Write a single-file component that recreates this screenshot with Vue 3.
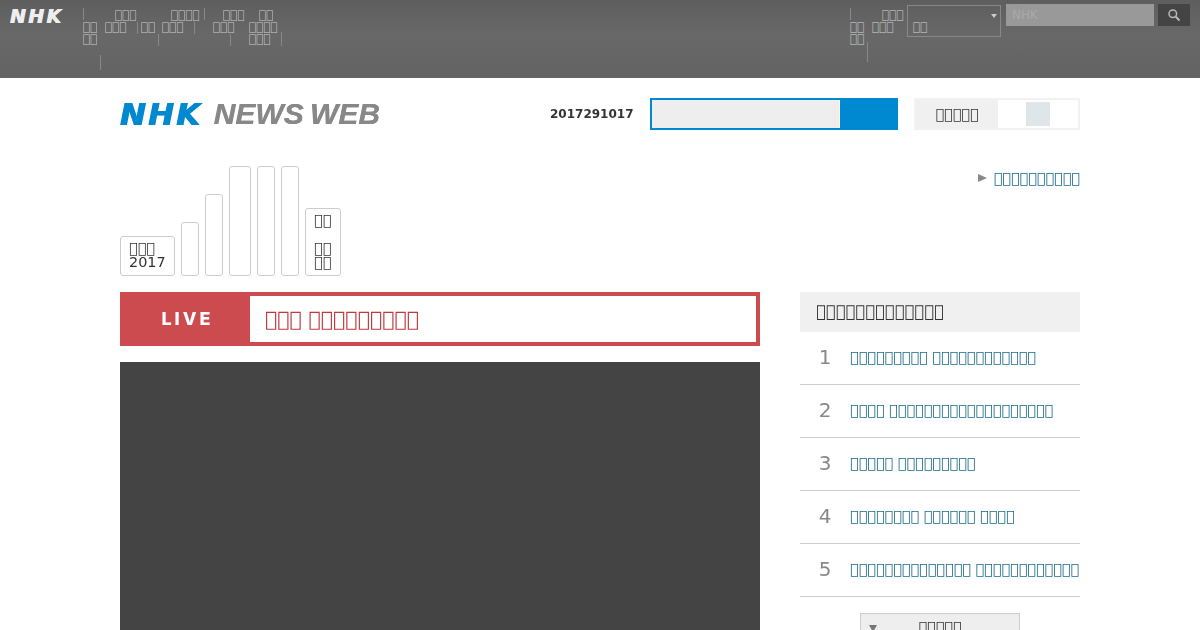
<script setup>
const box = (n) => '\uE000'.repeat(n);
const words = (...counts) => counts.map(box).join(' ');

const globalNav = [
  { lines: [2, 2], row: 2, width: 22, indent: 0 },
  { lines: [3, 3], row: 1, width: 32, indent: 10 },
  { lines: [2], row: 2, width: 25, indent: 4 },
  { lines: [4, 3], row: 1, width: 51, indent: 9 },
  { lines: [3, 3], row: 1, width: 36, indent: 10 },
  { lines: [2, 4, 3], row: 1, width: 40, indent: 10 },
];

const separators = [
  { x: 83, y: 8, h: 12 }, { x: 137, y: 22, h: 12 }, { x: 158, y: 34, h: 12 }, { x: 194, y: 22, h: 12 },
  { x: 204, y: 8, h: 12 }, { x: 230, y: 34, h: 12 }, { x: 281, y: 32, h: 14 }, { x: 100, y: 55, h: 15 },
];

const tabs = [
  { cls: 'tab-home', lines: [box(3), '2017'] },
  { cls: 'tab-a' }, { cls: 'tab-b' }, { cls: 'tab-c' }, { cls: 'tab-d' }, { cls: 'tab-e' },
];

const ranking = [
  words(9, 12), words(4, 19), words(5, 9), words(8, 6, 4), words(14, 12),
];
</script>

<template>
  <div class="page">
    <header class="global-bar">
      <div class="global-logo">NHK</div>
      <nav class="global-nav">
        <span v-for="s in separators" :key="s.x" class="sep" :style="{ left: s.x - 83 + 'px', top: s.y + 'px', height: s.h + 'px' }"></span>
        <a
          v-for="(item, i) in globalNav"
          :key="i"
          class="global-item"
          :class="'row-' + item.row"
          :style="{ width: item.width + 'px' }"
        >
          <span v-for="(n, j) in item.lines" :key="j" class="global-line" :style="{ paddingLeft: (j === 0 ? item.indent : 0) + 'px' }">{{ box(n) }}</span>
        </a>
      </nav>
      <div class="global-tools">
        <div class="tools-nav">
          <span class="sep tools-sep-a"></span>
          <span class="sep tools-sep-b"></span>
          <a class="global-item row-2 tools-first"><span class="global-line">{{ box(2) }}</span><span class="global-line">{{ box(2) }}</span></a>
          <a class="global-item row-1 tools-second"><span class="global-line indent">{{ box(3) }}</span><span class="global-line">{{ box(3) }}</span></a>
        </div>
        <div class="region-select">
          <span class="region-label">{{ box(2) }}</span>
          <i class="region-arrow"></i>
        </div>
        <div class="global-search">NHK</div>
        <button class="global-search-btn">
          <svg width="14" height="14" viewBox="0 0 14 14" fill="none" stroke="#b8b8b8">
            <circle cx="5.8" cy="5.8" r="3.8" stroke-width="1.5" />
            <path d="M8.8 8.8l3.7 3.7" stroke-width="2" />
          </svg>
        </button>
      </div>
    </header>

    <main class="content">
      <div class="masthead">
        <div class="logo">
          <span class="logo-nhk">NHK</span>
          <span class="logo-web">NEWS WEB</span>
        </div>
        <div class="date">2017291017</div>
        <div class="site-search">
          <div class="site-search-input"></div>
          <button class="site-search-btn"></button>
        </div>
        <div class="font-size">
          <div class="font-size-label">{{ box(5) }}</div>
          <div class="font-size-options"><span class="font-size-current"></span></div>
        </div>
      </div>

      <div class="tabs-row">
        <ul class="tabs">
          <li v-for="tab in tabs" :key="tab.cls" class="tab" :class="tab.cls">
            <span v-for="line in tab.lines" :key="line">{{ line }}</span>
          </li>
          <li class="tab tab-more">
            <span class="more-top">{{ box(2) }}</span>
            <span>{{ box(2) }}</span>
            <span>{{ box(2) }}</span>
          </li>
        </ul>
        <a class="all-link"><i class="all-arrow"></i>{{ box(10) }}</a>
      </div>

      <div class="columns">
        <section class="main-col">
          <div class="live">
            <div class="live-tag">LIVE</div>
            <div class="live-title">{{ words(3, 9) }}</div>
          </div>
          <div class="video"></div>
        </section>
        <aside class="side-col">
          <h2 class="side-title">{{ box(13) }}</h2>
          <ol class="rank">
            <li v-for="(title, i) in ranking" :key="i" class="rank-row">
              <span class="rank-num">{{ i + 1 }}</span>
              <a class="rank-link">{{ title }}</a>
            </li>
          </ol>
          <button class="more-btn"><i class="more-arrow"></i><span class="more-label">{{ box(5) }}</span></button>
        </aside>
      </div>
    </main>
  </div>
</template>

<style>
html, body {
  margin: 0;
  height: 630px;
  overflow: hidden;
  background: #fff;
}
</style>

<style scoped>
.page {
  width: 1200px;
  height: 630px;
  overflow: hidden;
  font-family: "DejaVu Sans", sans-serif;
  will-change: opacity;
}

.global-bar {
  height: 78px;
  background: linear-gradient(#5e5e5e, #686868 45%, #636363);
  display: flex;
  color: #b4b4b4;
  font-size: 12px;
  line-height: 12px;
}

.global-logo {
  width: 83px;
  padding: 7px 0 0 10px;
  box-sizing: border-box;
  font-size: 19px;
  line-height: 18px;
  font-weight: bold;
  font-style: italic;
  letter-spacing: 2.4px;
  color: #eee;
  text-shadow: 0.5px 0 #eee, -0.3px 0 #eee;
}

.global-nav {
  position: relative;
  display: flex;
  align-items: flex-start;
  width: 210px;
  margin-top: 9px;
  margin-bottom: -9px;
}

.sep {
  position: absolute;
  width: 1px;
  background: #888;
  margin-top: -9px;
}

.global-item {
  display: flex;
  flex-direction: column;
  flex: none;
}

.global-item.row-2 {
  padding-top: 12px;
}

.global-line {
  display: block;
  white-space: nowrap;
  height: 12px;
}

.global-tools {
  margin-left: auto;
  display: flex;
  align-items: flex-start;
  padding: 4px 10px 0 0;
}

.tools-nav {
  position: relative;
  display: flex;
  width: 57px;
  padding-top: 5px;
}

.tools-sep-a {
  left: 0;
  top: 13px;
  height: 12px;
}

.tools-sep-b {
  left: 17px;
  top: 47px;
  height: 20px;
}

.tools-first {
  width: 22px;
}

.tools-second {
  width: 35px;
}

.indent {
  padding-left: 10px;
}

.region-select {
  position: relative;
  width: 94px;
  height: 32px;
  margin-top: 1px;
  box-sizing: border-box;
  border: 1px solid #888;
  padding: 15px 0 0 5px;
}

.region-arrow {
  position: absolute;
  right: 3px;
  top: 8px;
  border: 3px solid transparent;
  border-top: 4px solid #ccc;
  border-bottom: 0;
}

.global-search {
  width: 148px;
  height: 22px;
  margin-left: 5px;
  background: #999;
  color: #aaa;
  font-size: 12px;
  line-height: 22px;
  padding-left: 6px;
  box-sizing: border-box;
}

.global-search-btn {
  width: 32px;
  height: 22px;
  margin-left: 4px;
  padding: 0;
  border: 0;
  background: #444;
  display: flex;
  align-items: center;
  justify-content: center;
}

.content {
  width: 960px;
  margin: 0 auto;
}

.masthead {
  display: flex;
  align-items: center;
  height: 32px;
  padding-top: 20px;
}

.logo {
  display: flex;
  align-items: center;
  width: 430px;
}

.logo-nhk {
  font-size: 31px;
  line-height: 32px;
  font-weight: bold;
  font-style: italic;
  color: #0088d0;
  letter-spacing: 2.2px;
  text-shadow: 0.7px 0 #0088d0, -0.5px 0 #0088d0;
}

.logo-web {
  margin-left: 11px;
  font-family: "Liberation Sans", sans-serif;
  font-size: 30px;
  line-height: 32px;
  font-weight: bold;
  font-style: italic;
  word-spacing: -2px;
  color: #888;
  text-shadow: 0.4px 0 #888;
}

.date {
  width: 100px;
  font-size: 12px;
  font-weight: bold;
  color: #333;
}

.site-search {
  width: 248px;
  height: 32px;
  box-sizing: border-box;
  border: 2px solid #0088d0;
  display: flex;
}

.site-search-input {
  flex: 1;
  background: #eee;
  border-right: 1px solid #fff;
}

.site-search-btn {
  width: 56px;
  border: 0;
  padding: 0;
  background: #0088d0;
}

.font-size {
  width: 166px;
  height: 32px;
  margin-left: 16px;
  box-sizing: border-box;
  border: 2px solid #f2f2f2;
  display: flex;
}

.font-size-label {
  width: 82px;
  background: #f0f0f0;
  color: #333;
  font-size: 14.4px;
  line-height: 28px;
  text-align: center;
}

.font-size-options {
  flex: 1;
  padding: 2px 0 0 28px;
}

.font-size-current {
  display: block;
  width: 24px;
  height: 24px;
  background: #dfe6ea;
}

.tabs-row {
  display: flex;
  justify-content: space-between;
  align-items: flex-start;
  height: 110px;
  margin-top: 36px;
}

.tabs {
  list-style: none;
  margin: 0;
  padding: 0;
  height: 110px;
  display: flex;
  align-items: flex-end;
  gap: 6px;
}

.tab {
  box-sizing: border-box;
  border: 1px solid #ccc;
  border-radius: 3px;
  width: 18px;
  color: #333;
  font-size: 14.4px;
  line-height: 14px;
}

.tab span {
  display: block;
}

.tab-home {
  width: 55px;
  height: 40px;
  padding: 4px 0 0 8px;
}

.tab-a {
  height: 54px;
}

.tab-b {
  height: 82px;
}

.tab-c {
  width: 22px;
  height: 110px;
}

.tab-d,
.tab-e {
  height: 110px;
}

.tab-more {
  width: 36px;
  height: 68px;
  padding: 4px 0 0 8px;
}

.more-top {
  margin-bottom: 14px;
}

.all-link {
  display: flex;
  align-items: center;
  margin-top: 4px;
  font-size: 14.4px;
  color: #1a6a8a;
}

.all-arrow {
  width: 0;
  margin-right: 7px;
  border: 4.5px solid transparent;
  border-left: 9px solid #888;
  border-right: 0;
}

.columns {
  display: flex;
  justify-content: space-between;
  margin-top: 16px;
}

.main-col {
  width: 640px;
}

.live {
  height: 54px;
  box-sizing: border-box;
  display: flex;
  border: 4px solid #cc4b4f;
  border-left: 0;
  background: #fff;
}

.live-tag {
  width: 130px;
  box-sizing: border-box;
  padding-left: 5px;
  background: #cc4b4f;
  color: #fff;
  font-family: "Inter", sans-serif;
  font-weight: 800;
  font-size: 18px;
  letter-spacing: 3px;
  line-height: 46px;
  text-align: center;
}

.live-title {
  padding-left: 15px;
  color: #c0393f;
  font-size: 20.5px;
  line-height: 46px;
}

.video {
  height: 300px;
  margin-top: 16px;
  background: #444;
}

.side-col {
  width: 280px;
}

.side-title {
  margin: 0;
  height: 40px;
  padding-left: 16px;
  background: #f0f0f0;
  color: #333;
  font-size: 16.4px;
  font-weight: normal;
  line-height: 40px;
}

.rank {
  list-style: none;
  margin: 0;
  padding: 0;
}

.rank-row {
  height: 53px;
  box-sizing: border-box;
  border-bottom: 1px solid #ccc;
  display: flex;
  align-items: center;
  padding-bottom: 2px;
  white-space: nowrap;
}

.rank-num {
  flex: none;
  width: 50px;
  text-align: center;
  color: #888;
  font-size: 20px;
}

.rank-link {
  font-size: 14.4px;
  color: #1a6a8a;
}

.more-btn {
  display: flex;
  justify-content: center;
  align-items: flex-start;
  position: relative;
  width: 160px;
  height: 40px;
  margin: 16px auto 0;
  padding: 3px 0 0;
  border: 1px solid #ccc;
  background: #eee;
  font-family: inherit;
  font-size: 14.4px;
  line-height: 20px;
}

.more-label {
  color: #333;
  will-change: opacity;
}

.more-arrow {
  position: absolute;
  left: 8px;
  top: 11px;
  border: 4px solid transparent;
  border-top: 7px solid #777;
  border-bottom: 0;
}
</style>
